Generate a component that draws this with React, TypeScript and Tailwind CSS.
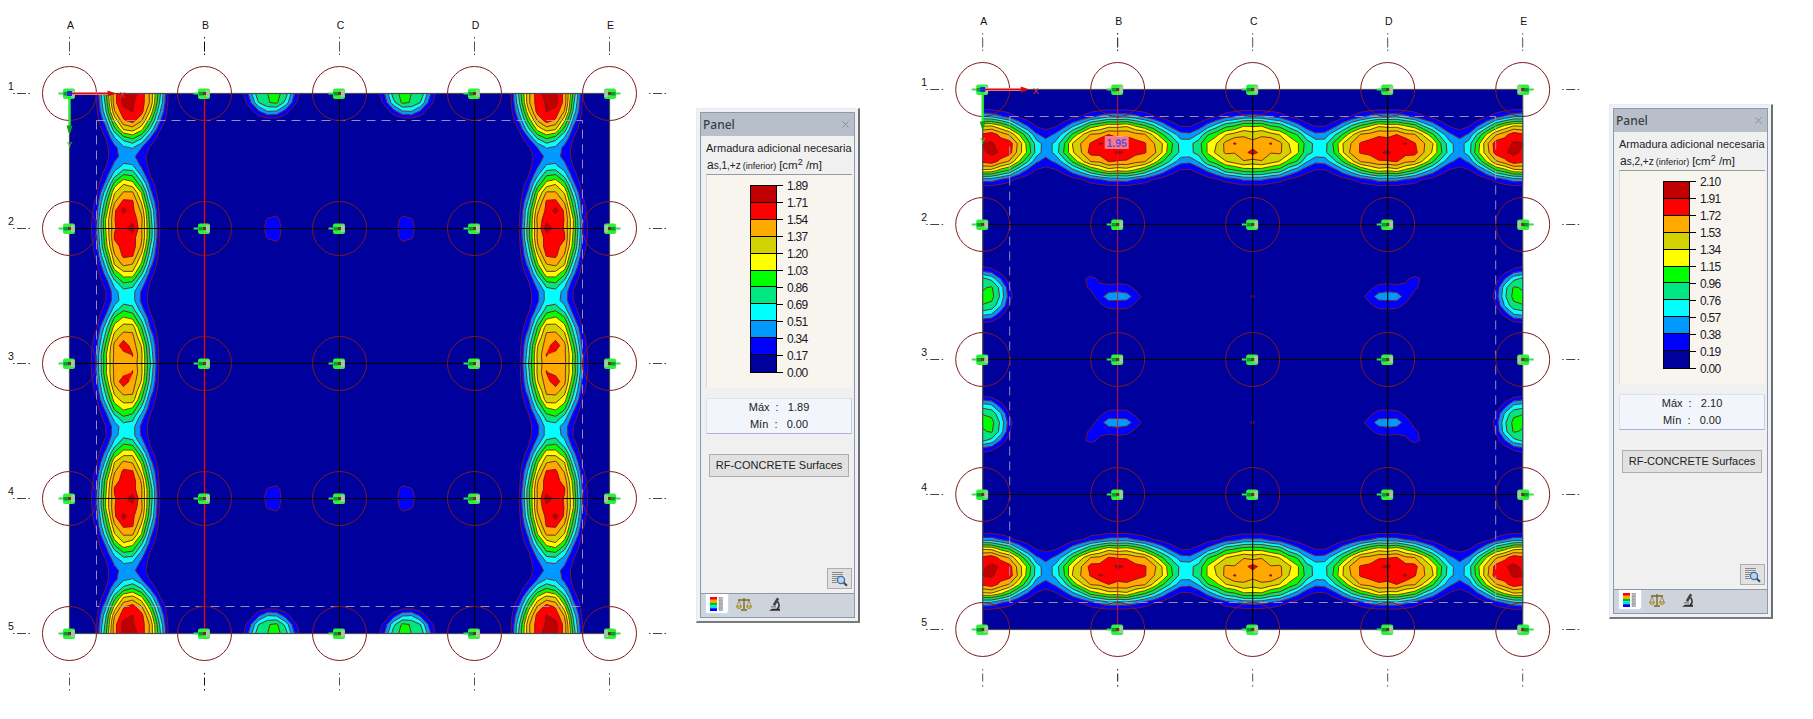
import { X } from "lucide-react";

const MESH = 9;
const SIZE = 540;
const COLORS = ["#0000ff", "#0099ff", "#00ffff", "#00e680", "#00ff00", "#ffff00", "#d2d200", "#ffaa00", "#ff0000", "#c00000"];

type Bump = [number, number, number, number, number];

function sg(dx: number, dy: number, sx: number, sy: number) {
  const r = Math.sqrt((dx / sx) ** 2 + (dy / sy) ** 2);
  return Math.exp(-(r ** 4));
}

function sumBumps(u: number, v: number, list: Bump[]) {
  let t = 0;
  for (const [cu, cv, a, su, sv] of list) t += a * sg(u - cu, v - cv, su, sv);
  return t;
}

const fold = (a: number) => Math.min(a, SIZE - a);
const wobble = (u: number, v: number, f: number) => 0.06 * Math.sin(u * 1.31 + v * 0.47) * Math.sin(v * 0.93 - u * 0.29) * Math.min(1, f);

const leftBumps: Bump[] = [
  [63, 0, 1.48, 29, 46],
  [57, 135, 1.36, 27, 56],
  [56, 270, 1.23, 27, 56],
  [54, 117, 0.14, 6, 6],
  [63, 135, 0.14, 6, 6],
  [54, 252, 0.17, 6, 6],
  [54, 288, 0.17, 6, 6],
  [202, 0, 0.9, 23, 21],
  [204, 135, 0.3, 10, 16],
];

function leftField(a: number, b: number) {
  const u = fold(a);
  const v = fold(b);
  const f = sumBumps(u, v, leftBumps) + 0.3 * Math.exp(-(((u - 57) / 21) ** 2));
  return f + wobble(u, v, f);
}

const rightBumps: Bump[] = [
  [0, 58, 1.72, 50, 30],
  [135, 58, 1.62, 58, 30],
  [270, 58, 1.4, 58, 30],
  [117, 54, 0.14, 6, 6],
  [135, 63, 0.14, 6, 6],
  [252, 54, 0.18, 6, 6],
  [288, 54, 0.18, 6, 6],
  [270, 63, 0.18, 6, 6],
  [0, 205.5, 1.0, 25, 24],
  [135, 207, 0.45, 24, 12],
  [108, 192, 0.24, 12, 10],
  [270, 207, 0.24, 9, 6],
];

function rightField(a: number, b: number) {
  const u = fold(a);
  const v = fold(b);
  const f = sumBumps(u, v, rightBumps) + 0.22 * Math.exp(-(((v - 60) / 21) ** 2));
  return f + wobble(u, v, f);
}

function contours(field: (u: number, v: number) => number, levels: number[]) {
  const n = Math.round(SIZE / MESH);
  const g: number[][] = [];
  for (let j = 0; j <= n; j++) {
    g.push([]);
    for (let i = 0; i <= n; i++) g[j].push(field(i * MESH, j * MESH));
  }
  return levels.map((lv) => {
    let fill = "";
    let line = "";
    for (let j = 0; j < n; j++) {
      for (let i = 0; i < n; i++) {
        const c: [number, number, number][] = [
          [i, j, g[j][i]],
          [i + 1, j, g[j][i + 1]],
          [i + 1, j + 1, g[j + 1][i + 1]],
          [i, j + 1, g[j + 1][i]],
        ];
        const pts: string[] = [];
        const cross: string[] = [];
        for (let k = 0; k < 4; k++) {
          const p = c[k];
          const q = c[(k + 1) % 4];
          if (p[2] >= lv) pts.push(`${p[0] * MESH} ${p[1] * MESH}`);
          if (p[2] >= lv !== q[2] >= lv) {
            const t = (lv - p[2]) / (q[2] - p[2]);
            const s = `${((p[0] + (q[0] - p[0]) * t) * MESH).toFixed(1)} ${((p[1] + (q[1] - p[1]) * t) * MESH).toFixed(1)}`;
            pts.push(s);
            cross.push(s);
          }
        }
        if (pts.length >= 3) fill += `M${pts.join("L")}Z`;
        for (let k = 0; k + 1 < cross.length; k += 2) line += `M${cross[k]}L${cross[k + 1]}`;
      }
    }
    return { fill, line };
  });
}

const LEFT_VALUES = ["1.89", "1.71", "1.54", "1.37", "1.20", "1.03", "0.86", "0.69", "0.51", "0.34", "0.17", "0.00"];
const RIGHT_VALUES = ["2.10", "1.91", "1.72", "1.53", "1.34", "1.15", "0.96", "0.76", "0.57", "0.38", "0.19", "0.00"];
const LEFT_BANDS = contours(leftField, [...LEFT_VALUES].reverse().slice(1, 11).map(Number));
const RIGHT_BANDS = contours(rightField, [...RIGHT_VALUES].reverse().slice(1, 11).map(Number));

const LABELS = ["A", "B", "C", "D", "E"];

function Node({ x, y, flip }: { x: number; y: number; flip?: boolean }) {
  const s = flip ? -1 : 1;
  return (
    <g transform={`translate(${x} ${y}) scale(${s} 1)`}>
      <rect x={-6.5} y={-5} width={12} height={10.5} rx={2} fill="#2ff03a" />
      <rect x={-11} y={-1} width={6} height={2} fill="#38e048" />
      <rect x={-6} y={-1.5} width={5} height={3.5} fill="#0b9a34" />
      <rect x={1.5} y={-3.5} width={3.5} height={7} fill="#a9c4a9" />
      <rect x={-1.5} y={-1.5} width={3} height={3} fill="#7a2a18" />
    </g>
  );
}

function Diagram({ x0, y0, view, bands, blue }: { x0: number; y0: number; view: string; bands: { fill: string; line: string }[]; blue?: boolean }) {
  const xs = [0, 135, 270, 405, 540].map((d) => x0 + d);
  const ys = [0, 135, 270, 405, 540].map((d) => y0 + d);
  return (
    <svg viewBox={view} className="shrink-0 h-[719px] font-['Liberation_Sans',sans-serif]" style={{ width: Number(view.split(" ")[2]) }}>
      <rect x={x0} y={y0} width={SIZE} height={SIZE} fill="#00009c" />
      <g transform={`translate(${x0} ${y0})`}>
        {bands.map((b, i) => (
          <g key={i}>
            <path d={b.fill} fill={COLORS[i]} stroke={COLORS[i]} strokeWidth={0.4} />
            <path d={b.line} fill="none" stroke="#7a1a1a" strokeWidth={0.9} />
          </g>
        ))}
      </g>
      <rect x={x0} y={y0} width={SIZE} height={SIZE} fill="none" stroke="#4a4a55" strokeWidth={1.2} />
      <rect x={x0 + 27} y={y0 + 27} width={486} height={486} fill="none" stroke="#a8a8bc" strokeWidth={1} strokeDasharray="9 6" opacity={0.85} />
      {ys.slice(1, 4).map((y) => (
        <line key={y} x1={x0} x2={x0 + SIZE} y1={y} y2={y} stroke="#000" strokeWidth={1.2} />
      ))}
      <line x1={xs[1]} x2={xs[1]} y1={y0} y2={y0 + SIZE} stroke={blue ? "#e01030" : "#ff0000"} strokeWidth={blue ? 0.9 : 1.3} />
      <line x1={xs[2]} x2={xs[2]} y1={y0} y2={y0 + SIZE} stroke="#000" strokeWidth={1} />
      <line x1={xs[3]} x2={xs[3]} y1={y0} y2={y0 + SIZE} stroke="#000" strokeWidth={1.2} />
      {xs.map((x, i) => (
        <g key={x}>
          <text x={x + 1} y={y0 - 64.5} fontSize={10.5} textAnchor="middle" fill="#111">{LABELS[i]}</text>
          <path d={`M${x} ${y0 - 56.5}v1.5M${x} ${y0 - 52}v10M${x} ${y0 - 40}v1.5M${x} ${y0 + 579.5}v1.5M${x} ${y0 + 584}v8M${x} ${y0 + 595.5}v1.5`} stroke={i === 1 ? "#111" : "#555"} strokeWidth={1} />
        </g>
      ))}
      {ys.map((y, i) => (
        <g key={y}>
          <text x={x0 - 58.5} y={y - 4} fontSize={10.5} textAnchor="middle" fill="#111">{i + 1}</text>
          <path d={`M${x0 - 56.5} ${y}h1.5M${x0 - 52.5} ${y}h9M${x0 - 41} ${y}h1.5M${x0 + 579.5} ${y}h1.5M${x0 + 583.5} ${y}h9M${x0 + 595} ${y}h1.5`} stroke="#444" strokeWidth={1} />
        </g>
      ))}
      {ys.map((y) =>
        xs.map((x) => (
          <circle key={`${x}-${y}`} cx={x} cy={y} r={27} fill="none" stroke="#7c1b1f" strokeWidth={1} />
        )),
      )}
      {ys.map((y) => xs.map((x, i) => <Node key={`${x}:${y}`} x={x} y={y} flip={i === 4} />))}
      <line x1={x0} x2={x0 + 38} y1={y0} y2={y0} stroke="#ff9a9a" strokeWidth={3} />
      <line x1={x0} x2={x0 + 38} y1={y0} y2={y0} stroke="#d01010" strokeWidth={1.5} />
      <path d={`M${x0 + 38} ${y0 - 3}l9 3l-9 3z`} fill="#d01010" />
      <text x={x0 + 50} y={y0 + 4} fontSize={9} fill="#e03030">X</text>
      <line x1={x0} x2={x0} y1={y0} y2={y0 + 32} stroke="#20f030" strokeWidth={2.4} />
      <path d={`M${x0 - 3} ${y0 + 32}h6l-3 10z`} fill="#10a020" />
      <rect x={x0 - 2.5} y={y0 - 2.5} width={5} height={5} fill="#1030e0" />
      <text x={x0} y={y0 + 54} fontSize={9} textAnchor="middle" fill="#20d030">Y</text>
      {blue && (
        <g>
          <rect x={x0 + 122} y={y0 + 46.5} width={24} height={13} fill="#ffc8d8" opacity={0.6} />
          <text x={x0 + 134} y={y0 + 57} fontSize={10.5} fontWeight={700} textAnchor="middle" fill="#5a50e0">1.95</text>
        </g>
      )}
    </svg>
  );
}

function LegendIcon() {
  const c = ["#ff0000", "#ffaa00", "#00c000", "#00e0e0", "#0000ff"];
  return (
    <svg width="16" height="16" viewBox="0 0 16 16">
      {c.map((f, i) => (
        <g key={f}>
          <rect x="1" y={1 + i * 2.8} width="7" height="2.8" fill={f} />
          <rect x="10" y={1.5 + i * 2.8} width="3.5" height="2" fill="#c4c4c4" stroke="#777" strokeWidth="0.5" />
        </g>
      ))}
    </svg>
  );
}

function BalanceIcon() {
  return (
    <svg width="16" height="16" viewBox="0 0 16 16" fill="none">
      <path d="M2 4h12M8 2v11M5 14h6" stroke="#7a6a20" strokeWidth="1.4" />
      <path d="M3 4L1 10M3 4l2 6M13 4l-2 6M13 4l2 6" stroke="#8a7a30" strokeWidth="0.7" />
      <path d="M0.5 10h5a2.5 2.5 0 0 1-5 0zM10.5 10h5a2.5 2.5 0 0 1-5 0z" fill="#e2c240" stroke="#7a6a20" strokeWidth="0.6" />
    </svg>
  );
}

function MicroscopeIcon() {
  return (
    <svg width="16" height="16" viewBox="0 0 16 16" fill="none">
      <path d="M11 1.5l2.2 1.4L9 10 6.8 8.6z" fill="#444" />
      <path d="M11.5 5.5c2.5 2.5 2 6-0.5 7.5" stroke="#333" strokeWidth="1.6" />
      <path d="M3 14.8h11v-2H6z" fill="#2e2e2e" />
      <path d="M5 10.8h5" stroke="#777" strokeWidth="1.2" />
    </svg>
  );
}

function SearchIcon() {
  return (
    <svg width="18" height="16" viewBox="0 0 18 16" fill="none">
      <path d="M1 1.5h11M1 3.5h11M1 5.5h11M1 7.5h5M1 9.5h4M1 11.5h5" stroke="#8a8a8a" strokeWidth="1" />
      <circle cx="10" cy="9" r="3.6" fill="#b8d4ee" stroke="#3f6f9f" strokeWidth="1.3" />
      <path d="M12.8 11.8l3.2 3" stroke="#2a4a6a" strokeWidth="2" />
    </svg>
  );
}

function Panel({ top, subId, values }: { top: string; subId: string; values: string[] }) {
  const colors = ["#c00000", "#ff0000", "#ffaa00", "#d2d200", "#ffff00", "#00ff00", "#00e680", "#00ffff", "#0099ff", "#0000ff", "#00009c"];
  return (
    <div className={`${top} shrink-0 w-[164px] h-[515px] flex flex-col border-l border-t border-[#e6ebf2] border-r-2 border-b-2 border-r-[#6e6e6e] border-b-[#7a7a7a] bg-[#eef1f5] p-[3px] font-['Liberation_Sans',sans-serif] text-[#222]`}>
      <div className="flex-1 min-h-0 flex flex-col border border-[#8f9aa8]">
        <div className="h-[23px] shrink-0 bg-[#b9bfc8] flex items-center justify-between pl-[2px] pr-[3px] text-[12px] font-['Noto_Sans',sans-serif] font-medium text-[#3a3f46]">
          <span>Panel</span>
          <X size={11} strokeWidth={2} color="#868c95" />
        </div>
        <div className="flex-1 min-h-0 flex flex-col bg-[#f0f0f0] pl-[5px] pr-[2px] pt-[5px]">
          <div className="text-[11px] leading-[15px] whitespace-nowrap">Armadura adicional necesaria</div>
          <div className="h-[18px] flex items-baseline whitespace-nowrap leading-[18px] pl-[1px]">
            <span className="text-[12px]">a</span>
            <span className="text-[10px]">{subId}</span>
            <span className="text-[9px] ml-[2px]">(inferior)</span>
            <span className="text-[11.5px] ml-[3px]">[cm<sup className="text-[9px]">2</sup> /m]</span>
          </div>
          <div className="h-[214px] shrink-0 bg-[#f8f5ee] border-t border-t-[#9a9a9a] border-l border-l-[#d8d8d8] flex pl-[43px] pt-[10px]">
            <div className="w-[27px] h-[188px] border border-black flex flex-col">
              {colors.map((c, i) => (
                <div key={c} className={`h-[17px] ${i < 10 ? "border-b border-black" : ""}`} style={{ backgroundColor: c }} />
              ))}
            </div>
            <div className="flex flex-col -mt-[8px]">
              {values.map((v) => (
                <div key={v} className="h-[17px] flex items-center gap-[4px]">
                  <div className="w-[6px] h-px bg-black" />
                  <span className="text-[12px] leading-none tracking-[-0.7px] text-[#181828]">{v}</span>
                </div>
              ))}
            </div>
          </div>
          <div className="mt-[10px] h-[36px] shrink-0 border border-[#dde0ee] border-b-[#aab0e0] border-r-[#c8cce8] bg-[#f2f5fb] flex flex-col items-center justify-center text-[11px] leading-[17px]">
            <div className="whitespace-pre">Máx  :   {values[0]}</div>
            <div className="whitespace-pre">Mín  :   {values[11]}</div>
          </div>
          <div className="mt-[20px] mx-[3px] h-[23px] shrink-0 bg-[#e1e1e1] border border-[#adadad] flex items-center justify-center text-[11px] whitespace-nowrap">RF-CONCRETE Surfaces</div>
          <div className="mt-auto mb-[4px] self-end w-[25px] h-[21px] bg-[#e1e1e1] border border-[#adadad] flex items-center justify-center">
            <SearchIcon />
          </div>
        </div>
        <div className="h-[24px] shrink-0 bg-[#ced3dc] border-t border-t-[#8f9aa8] flex items-start pl-[4px]">
          <div className="w-[24px] h-[20px] bg-white rounded-b-[3px] border-x border-b border-[#c6e0ee] flex items-center justify-center">
            <LegendIcon />
          </div>
          <div className="ml-[7px] mt-[2px]"><BalanceIcon /></div>
          <div className="ml-[14px] mt-[2px]"><MicroscopeIcon /></div>
        </div>
      </div>
    </div>
  );
}

export default function App() {
  return (
    <div className="w-[1813px] h-[719px] bg-white flex items-start overflow-hidden">
      <Diagram x0={69.5} y0={93.5} view="0 0 696 719" bands={LEFT_BANDS} />
      <Panel top="mt-[108px]" subId="s,1,+z" values={LEFT_VALUES} />
      <Diagram x0={982.7} y0={89.5} view="860 0 749 719" bands={RIGHT_BANDS} blue />
      <Panel top="mt-[104px]" subId="s,2,+z" values={RIGHT_VALUES} />
    </div>
  );
}
